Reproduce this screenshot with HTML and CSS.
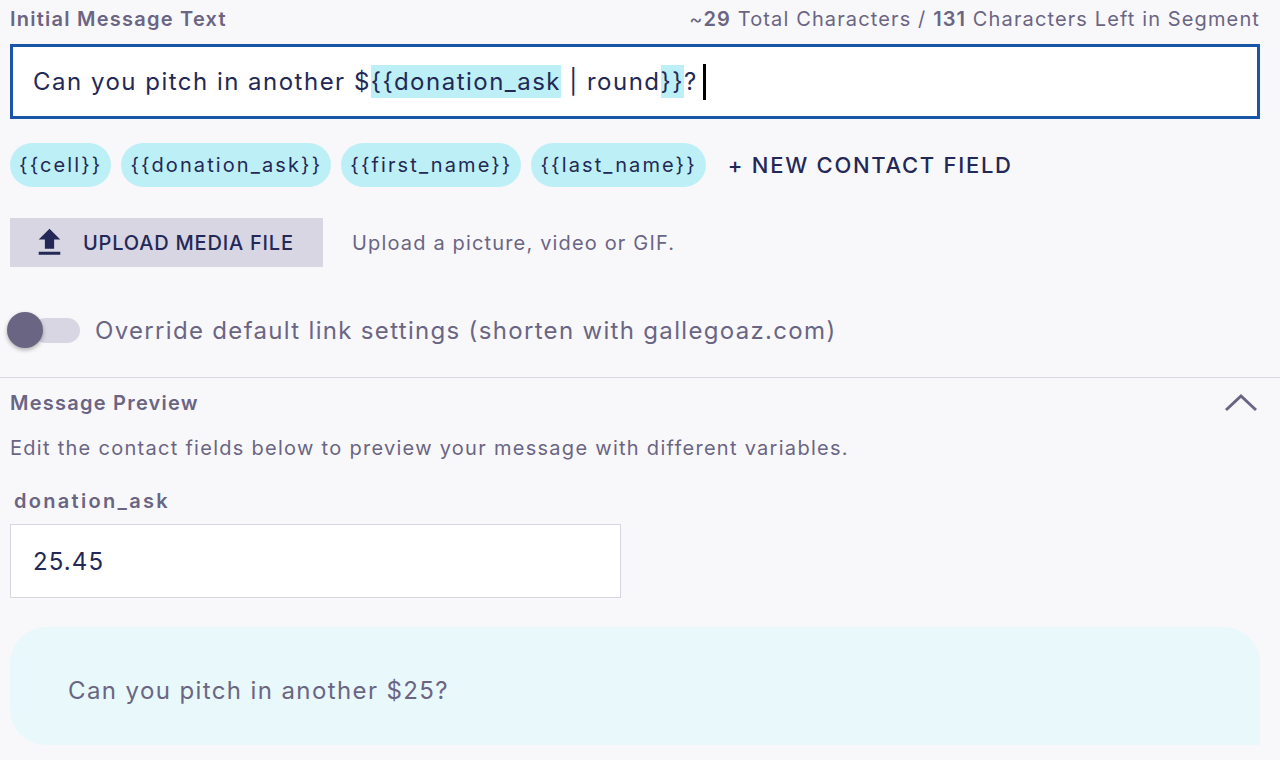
FILE: index.html
```html
<!DOCTYPE html>
<html>
<head>
<meta charset="utf-8">
<link rel="stylesheet" href="styles.css">
</head>
<body>
<div class="page">
  <div class="head-row">
    <div class="label">Initial Message Text</div>
    <div class="counter">~<b>29</b> Total Characters / <b>131</b> Characters Left in Segment</div>
  </div>
  <div class="editor">Can you pitch in another $<span class="hl">{{donation_ask</span> | round<span class="hl">}}</span>?<span class="caret"></span></div>

  <div class="chips">
    <span class="chip">{{cell}}</span>
    <span class="chip">{{donation_ask}}</span>
    <span class="chip">{{first_name}}</span>
    <span class="chip">{{last_name}}</span>
    <span class="new-field">+ NEW CONTACT FIELD</span>
  </div>

  <div class="upload-row">
    <div class="upload-btn">
      <svg class="up-icon" viewBox="0 0 24 24" width="37" height="37"><path d="M9 16h6v-6h4l-7-7-7 7h4zm-4 2h14v2H5z" fill="#232857"/></svg>
      <span>UPLOAD MEDIA FILE</span>
    </div>
    <span class="hint">Upload a picture, video or GIF.</span>
  </div>

  <div class="toggle-row">
    <div class="switch"><div class="track"></div><div class="thumb"></div></div>
    <span class="toggle-label">Override default link settings (shorten with gallegoaz.com)</span>
  </div>

  <div class="preview">
    <div class="preview-head">
      <div class="label">Message Preview</div>
      <svg class="chev" viewBox="0 0 34 20" width="34" height="20"><polyline points="2,17 17,3 32,17" fill="none" stroke="#6b6584" stroke-width="3"/></svg>
    </div>
    <div class="desc">Edit the contact fields below to preview your message with different variables.</div>
    <div class="field-label">donation_ask</div>
    <div class="field-input">25.45</div>
    <div class="bubble">Can you pitch in another $25?</div>
  </div>
</div>
</body>
</html>
```

FILE: styles.css
```css
* { box-sizing: border-box; }
html, body { margin: 0; padding: 0; }
body {
  background: #f8f8fb;
  font-family: "Inter", "Open Sans", sans-serif;
  letter-spacing: 0.07em;
  color: #6b6584;
  width: 1280px;
  height: 760px;
  overflow: hidden;
}
.page { padding: 0 20px 0 10px; }
.head-row {
  display: flex;
  justify-content: space-between;
  align-items: center;
  height: 40px;
  padding-bottom: 2px;
}
.label { font-size: 20px; font-weight: 600; color: #6b6584; letter-spacing: 0.062em; }
.counter { font-size: 20px; color: #6b6584; }
.counter b { font-weight: 600; }
.editor {
  margin-top: 4px;
  height: 75px;
  border: 3px solid #1a56a8;
  background: #fff;
  padding: 0 20px;
  display: flex;
  align-items: center;
  font-size: 24px;
  letter-spacing: 0.062em;
  color: #232857;
  white-space: pre;
}
.hl { background: #bdf0f6; line-height: 33px; }
.caret { display: inline-block; width: 3px; height: 36px; background: #000; margin-left: 5px; }
.chips {
  display: flex;
  align-items: center;
  gap: 10px;
  margin-top: 24px;
}
.chip {
  background: #bdf0f6;
  border-radius: 22px;
  height: 44px;
  padding: 0 9px;
  display: flex;
  align-items: center;
  font-size: 20px;
  letter-spacing: 0.105em;
  color: #232857;
}
.new-field {
  margin-left: 12px;
  font-size: 22px;
  font-weight: 500;
  letter-spacing: 0.078em;
  color: #232857;
}
.upload-row {
  display: flex;
  align-items: center;
  margin-top: 31px;
  gap: 29px;
}
.upload-btn {
  width: 313px;
  height: 49px;
  background: #d8d6e2;
  display: flex;
  align-items: center;
  padding-left: 21px;
  gap: 15px;
  font-size: 20px;
  font-weight: 500;
  letter-spacing: 0.8px;
  color: #232857;
}
.up-icon { display: block; }
.hint { font-size: 20px; color: #6b6584; letter-spacing: 0.058em; }
.toggle-row {
  display: flex;
  align-items: center;
  height: 62px;
  margin-top: 32px;
  gap: 15px;
}
.switch { position: relative; width: 73px; height: 36px; margin-left: -3px; }
.track {
  position: absolute; left: 26px; top: 6px; width: 47px; height: 25px;
  border-radius: 13px; background: #d8d6e2;
}
.thumb {
  position: absolute; left: 0; top: 0; width: 36px; height: 36px;
  border-radius: 50%; background: #6b6584;
  box-shadow: 0 2px 4px rgba(0,0,0,0.3);
}
.toggle-label { font-size: 24px; color: #6b6584; letter-spacing: 0.055em; }
.preview {
  margin: 16px -20px 0 -10px;
  border-top: 1px solid #d8d6e2;
  padding: 0 20px 0 10px;
}
.preview-head {
  display: flex;
  justify-content: space-between;
  align-items: center;
  height: 50px;
}
.chev { margin-right: 2px; }
.desc { font-size: 20px; color: #6b6584; height: 40px; line-height: 40px; letter-spacing: 0.064em; }
.field-label { font-size: 20px; font-weight: 600; margin-top: 18px; padding-left: 4px; height: 30px; line-height: 30px; letter-spacing: 0.115em; }
.field-input {
  margin-top: 8px;
  width: 611px;
  height: 74px;
  background: #fff;
  border: 1px solid #d8d6e2;
  display: flex;
  align-items: center;
  padding-left: 22px;
  font-size: 24px;
  color: #232857;
}
.bubble {
  margin-top: 29px;
  height: 118px;
  background: #e9f8fa;
  border-radius: 36px 36px 0 36px;
  padding: 49px 0 0 58px;
  font-size: 24px;
  letter-spacing: 0.058em;
  color: #6b6584;
}
```
